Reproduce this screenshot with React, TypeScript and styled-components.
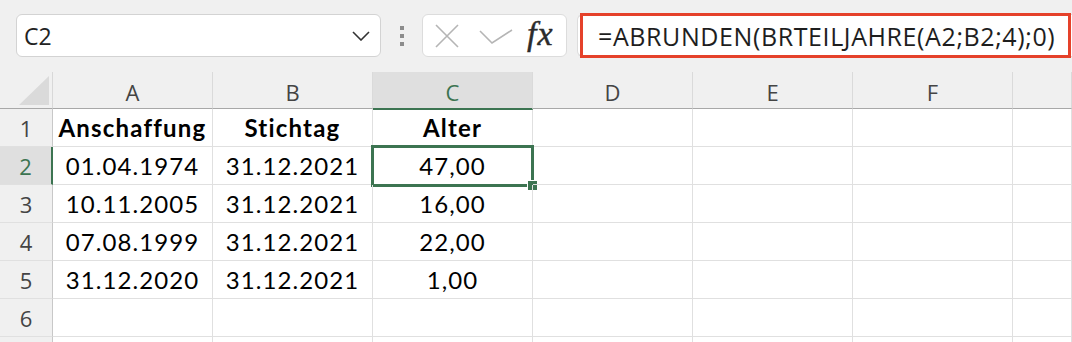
import styled, { createGlobalStyle } from "styled-components";

const GlobalStyle = createGlobalStyle`
  html, body {
    margin: 0;
    padding: 0;
    background: #f0f0f0;
    overflow: hidden;
  }
  * {
    box-sizing: border-box;
  }
`;

const GREEN = "#3c7451";

const columns = ["A", "B", "C", "D", "E", "F", ""];
const rows = [
  { n: "1", cells: ["Anschaffung", "Stichtag", "Alter"], bold: true },
  { n: "2", cells: ["01.04.1974", "31.12.2021", "47,00"] },
  { n: "3", cells: ["10.11.2005", "31.12.2021", "16,00"] },
  { n: "4", cells: ["07.08.1999", "31.12.2021", "22,00"] },
  { n: "5", cells: ["31.12.2020", "31.12.2021", "1,00"] },
  { n: "6", cells: [] },
  { n: "", cells: [] },
];

function App() {
  return (
    <Page>
      <GlobalStyle />
      <Toolbar>
        <NameBox>
          <NameText>C2</NameText>
          <svg width="18" height="10" viewBox="0 0 18 10">
            <polyline points="1,1 9,9 17,1" fill="none" stroke="#333" strokeWidth="1.6" />
          </svg>
        </NameBox>
        <Dots>
          <Dot />
          <Dot />
          <Dot />
        </Dots>
        <FxBox>
          <svg width="24" height="24" viewBox="0 0 24 24">
            <path d="M1 1 L23 23 M23 1 L1 23" stroke="#b5b5b5" strokeWidth="1.6" fill="none" />
          </svg>
          <CheckIcon width="34" height="16" viewBox="0 0 34 16">
            <polyline points="1,2 13,14 33,1" fill="none" stroke="#b5b5b5" strokeWidth="1.6" />
          </CheckIcon>
          <FxLabel>fx</FxLabel>
        </FxBox>
        <FormulaWrap>
          <Highlight>
            <FormulaText>=ABRUNDEN(BRTEILJAHRE(A2;B2;4);0)</FormulaText>
          </Highlight>
        </FormulaWrap>
      </Toolbar>
      <Sheet>
        <Corner>
          <svg width="32" height="30" viewBox="0 0 32 30">
            <polygon points="31,0 31,29 1,29" fill="#dadada" />
          </svg>
        </Corner>
        {columns.map((c, i) => (
          <ColHeader key={i} $active={c === "C"}>
            {c}
          </ColHeader>
        ))}
        {rows.map((r, idx) => (
          <Row key={idx} r={r} />
        ))}
      </Sheet>
    </Page>
  );
}

function Row({ r }: any) {
  return (
    <>
      <RowHeader $active={r.n === "2"}>{r.n}</RowHeader>
      {columns.map((_, i) => {
        const selected = r.n === "2" && i === 2;
        return (
          <Cell key={i} $bold={r.bold}>
            {r.cells[i] || ""}
            {selected && (
              <Selection>
                <Handle />
              </Selection>
            )}
          </Cell>
        );
      })}
    </>
  );
}

export default App;

const Page = styled.div`
  width: 1072px;
  height: 342px;
  overflow: hidden;
  background: #f0f0f0;
`;

const Toolbar = styled.div`
  height: 72px;
  display: flex;
  align-items: flex-start;
  padding: 14px 0 0 16px;
`;

const NameBox = styled.div`
  width: 365px;
  height: 43px;
  background: #fff;
  border: 1px solid #d3d3d3;
  border-radius: 6px;
  display: flex;
  align-items: center;
  justify-content: space-between;
  padding: 0 10px 0 7px;
`;

const NameText = styled.span`
  font-family: "Open Sans", "Noto Sans", sans-serif;
  font-size: 23px;
  color: #222;
  padding-top: 1px;
`;

const Dots = styled.div`
  width: 41px;
  display: flex;
  flex-direction: column;
  align-items: center;
  gap: 4px;
  padding-top: 12px;
`;

const Dot = styled.div`
  width: 4px;
  height: 4px;
  background: #8c8c8c;
`;

const FxBox = styled.div`
  width: 145px;
  height: 43px;
  background: #fff;
  border: 1px solid #dcdcdc;
  border-radius: 6px;
  display: flex;
  align-items: center;
  padding: 0 0 0 12px;
`;

const CheckIcon = styled.svg`
  margin-left: 20px;
  margin-top: 3px;
`;

const FxLabel = styled.span`
  font-family: "Liberation Serif", "DejaVu Serif", serif;
  font-style: italic;
  font-size: 34px;
  color: #2b2b2b;
  margin-left: 14px;
  margin-top: -4px;
  letter-spacing: 1px;
  -webkit-text-stroke: 0.4px #2b2b2b;
`;

const FormulaWrap = styled.div`
  flex: 1;
  height: 43px;
  margin-left: 10px;
  background: #fff;
  border-radius: 6px 0 0 6px;
  border: 1px solid #dcdcdc;
  border-right: none;
  display: flex;
`;

const Highlight = styled.div`
  flex: 1;
  margin: -2px 1px -2px 2px;
  border: 3px solid #e5412a;
  display: flex;
  align-items: center;
  padding-left: 15px;
`;

const FormulaText = styled.span`
  font-family: "Open Sans", "Noto Sans", sans-serif;
  font-size: 25px;
  letter-spacing: 0.6px;
  color: #1e1e1e;
  white-space: nowrap;
`;

const Sheet = styled.div`
  display: grid;
  grid-template-columns: 53px repeat(6, 160px) 1fr;
  grid-template-rows: 37px repeat(7, 38px);
  background: #fff;
`;

const Corner = styled.div`
  background: #f0f0f0;
  border-right: 1px solid #d8d8d8;
  border-bottom: 1px solid #a8a8a8;
  display: flex;
  align-items: flex-start;
  justify-content: flex-end;
  padding: 4px 2px 0 0;
`;

const ColHeader = styled.div<{ $active?: boolean }>`
  background: ${(p) => (p.$active ? "#dfdfdf" : "#f0f0f0")};
  border-right: 1px solid #dadada;
  border-bottom: ${(p) => (p.$active ? `2px solid ${GREEN}` : "1px solid #a8a8a8")};
  margin-bottom: ${(p) => (p.$active ? "-1px" : "0")};
  color: ${(p) => (p.$active ? GREEN : "#444")};
  font-family: "Open Sans", "Noto Sans", sans-serif;
  font-size: 22px;
  display: flex;
  align-items: center;
  justify-content: center;
  padding-top: 3px;
  position: relative;
  z-index: 1;
`;

const RowHeader = styled.div<{ $active?: boolean }>`
  background: ${(p) => (p.$active ? "#dfdfdf" : "#f0f0f0")};
  border-bottom: 1px solid #e0e0e0;
  border-right: ${(p) => (p.$active ? `2px solid ${GREEN}` : "1px solid #c8c8c8")};
  color: ${(p) => (p.$active ? GREEN : "#444")};
  font-family: "Open Sans", "Noto Sans", sans-serif;
  font-size: 22px;
  line-height: 28px;
  display: flex;
  align-items: flex-end;
  justify-content: center;
  padding-bottom: 4px;
`;

const Cell = styled.div<{ $bold?: boolean }>`
  position: relative;
  border-right: 1px solid #e0e0e0;
  border-bottom: 1px solid #e0e0e0;
  font-family: "Lato", "Liberation Sans", sans-serif;
  font-size: 24px;
  font-weight: ${(p) => (p.$bold ? 700 : 400)};
  letter-spacing: ${(p) => (p.$bold ? "1.2px" : "1.1px")};
  line-height: 28px;
  color: #000;
  display: flex;
  align-items: flex-end;
  justify-content: center;
  padding-bottom: 4px;
  white-space: nowrap;
`;

const Selection = styled.div`
  position: absolute;
  left: -2px;
  top: -2px;
  right: -2px;
  bottom: -3px;
  border: 3px solid ${GREEN};
  pointer-events: none;
`;

const Handle = styled.div`
  position: absolute;
  right: -6px;
  bottom: -6px;
  width: 9px;
  height: 9px;
  background: ${GREEN};
  outline: 1px solid #fff;
`;
